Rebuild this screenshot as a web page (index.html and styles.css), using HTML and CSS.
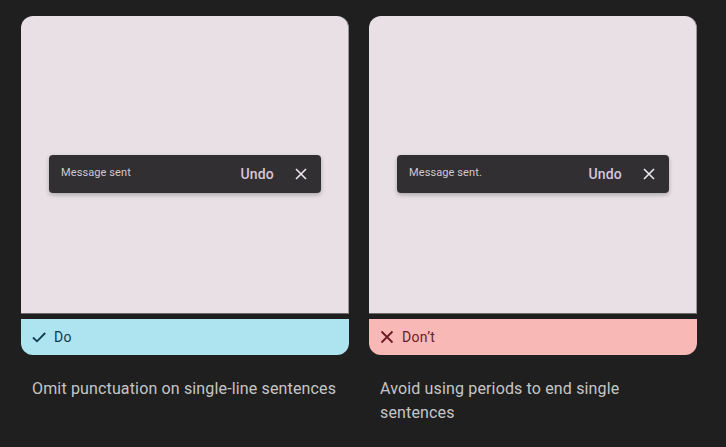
FILE: index.html
```html
<!DOCTYPE html>
<html>
<head>
<meta charset="utf-8">
<link rel="stylesheet" href="styles.css">
</head>
<body>
<div class="grid">
  <div class="item">
    <div class="card">
      <div class="preview">
        <div class="snackbar">
          <span class="msg">Message sent</span>
          <span class="undo">Undo</span>
          <svg class="close" viewBox="0 0 12 12" width="12" height="12"><path d="M1 1L11 11M11 1L1 11" stroke="#ece6ee" stroke-width="1.6" fill="none"/></svg>
        </div>
      </div>
      <div class="label do">
        <svg class="icon" viewBox="0 0 16 16" width="16" height="16"><path d="M2 8.5L6 12.3L14.2 4" stroke="#0e3a4b" stroke-width="1.8" fill="none"/></svg>
        <span>Do</span>
      </div>
    </div>
    <p class="caption">Omit punctuation on single-line sentences</p>
  </div>
  <div class="item">
    <div class="card">
      <div class="preview">
        <div class="snackbar">
          <span class="msg">Message sent.</span>
          <span class="undo">Undo</span>
          <svg class="close" viewBox="0 0 12 12" width="12" height="12"><path d="M1 1L11 11M11 1L1 11" stroke="#ece6ee" stroke-width="1.6" fill="none"/></svg>
        </div>
      </div>
      <div class="label dont">
        <svg class="icon" viewBox="0 0 16 16" width="16" height="16"><path d="M2.5 2.5L13.5 13.5M13.5 2.5L2.5 13.5" stroke="#6e1a22" stroke-width="1.8" fill="none"/></svg>
        <span>Don’t</span>
      </div>
    </div>
    <p class="caption">Avoid using periods to end single sentences</p>
  </div>
</div>
</body>
</html>
```
FILE: styles.css
```css
html, body {
  margin: 0;
  background: #1f1f1f;
  font-family: Roboto, "Noto Sans", sans-serif;
}
.grid {
  display: grid;
  grid-template-columns: 328px 328px;
  column-gap: 20px;
  padding: 16px 0 0 21px;
}
.card {
  display: flex;
  flex-direction: column;
  gap: 5px;
}
.preview {
  height: 298px;
  box-sizing: border-box;
  background: #e8e0e4;
  border-radius: 12px 12px 0 0;
  padding: 139px 0 0 28px;
  border-right: 1px solid #9c989a;
  border-bottom: 1px solid #6f6c6e;
}
.snackbar {
  width: 272px;
  height: 38px;
  box-sizing: border-box;
  background: #322f33;
  border-radius: 4px;
  box-shadow: 0 2px 4px rgba(0,0,0,0.25);
  display: flex;
  align-items: center;
  padding: 0 14px 0 12px;
}
.msg {
  font-size: 11px;
  color: #cfc8d0;
  flex: 1;
  margin-top: -4px;
  letter-spacing: 0.1px;
}
.undo {
  font-size: 14px;
  font-weight: 500;
  color: #d2c7db;
  margin-right: 21px;
  letter-spacing: 0.2px;
}
.close {
  display: block;
}
.label {
  height: 36px;
  border-radius: 0 0 12px 12px;
  display: flex;
  align-items: center;
  padding-left: 10px;
  gap: 7px;
  font-size: 14px;
  font-weight: 400;
  letter-spacing: 0.3px;
}
.label .icon {
  display: block;
}
.do {
  background: #ade4f0;
  color: #0e3a4b;
}
.dont {
  background: #f8b9b6;
  color: #6e1a22;
}
.caption {
  margin: 22px 0 0;
  padding-left: 11px;
  padding-right: 12px;
  font-size: 16px;
  line-height: 24px;
  letter-spacing: 0.15px;
  color: #c6c6c6;
}
```
